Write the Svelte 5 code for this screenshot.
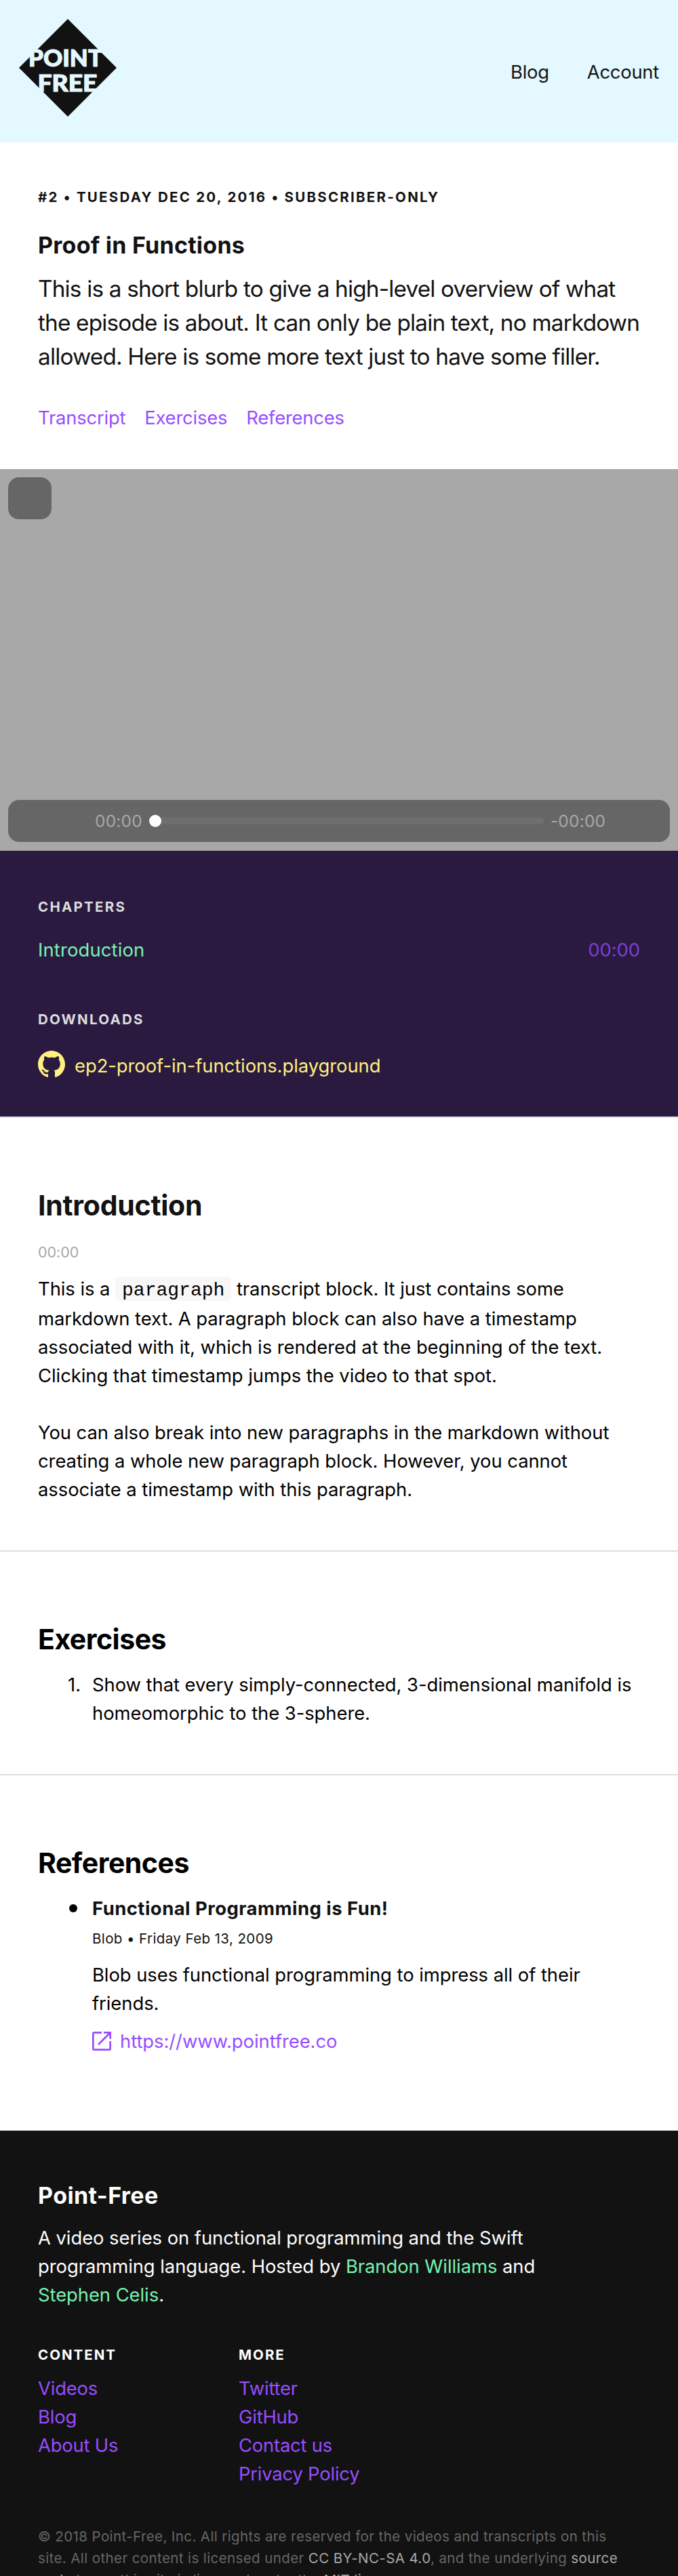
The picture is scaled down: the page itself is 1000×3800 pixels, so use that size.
<script>
  const jumpLinks = ['Transcript', 'Exercises', 'References'];
  const columns = [
    { title: 'Content', links: ['Videos', 'Blog', 'About Us'] },
    { title: 'More', links: ['Twitter', 'GitHub', 'Contact us', 'Privacy Policy'] }
  ];
</script>

<main>
  <header>
    <svg class="logo" viewBox="0 0 144 144" role="img" aria-label="Point-Free">
      <path d="M72 0L144 72L72 144L0 72Z" fill="#121212" />
      <text x="14" y="69.8" textLength="109" lengthAdjust="spacingAndGlyphs">POINT</text>
      <text x="27.5" y="106.8" textLength="88" lengthAdjust="spacingAndGlyphs">FREE</text>
    </svg>
    <nav><a>Blog</a><a>Account</a></nav>
  </header>

  <section class="intro">
    <h6>#2 • Tuesday Dec 20, 2016 • Subscriber-only</h6>
    <h1>Proof in Functions</h1>
    <p class="blurb">
      This is a short blurb to give a high-level overview of what<br />
      the episode is about. It can only be plain text, no markdown<br />
      allowed. Here is some more text just to have some filler.
    </p>
    <div class="jump">{#each jumpLinks as l}<a>{l}</a>{/each}</div>
  </section>

  <section class="video">
    <div class="big-play"></div>
    <div class="controls">
      <span>00:00</span>
      <div class="track"><i></i></div>
      <span>-00:00</span>
    </div>
  </section>

  <section class="side">
    <h6>Chapters</h6>
    <div class="chapter"><a>Introduction</a><span>00:00</span></div>
    <h6 class="second">Downloads</h6>
    <a class="download">
      <svg viewBox="0 0 16 16"><path fill="#fff080" d="M8 0C3.58 0 0 3.58 0 8c0 3.54 2.29 6.53 5.47 7.59.4.07.55-.17.55-.38 0-.19-.01-.82-.01-1.49-2.01.37-2.53-.49-2.69-.94-.09-.23-.48-.94-.82-1.13-.28-.15-.68-.52-.01-.53.63-.01 1.08.58 1.23.82.72 1.21 1.87.87 2.33.66.07-.52.28-.87.51-1.07-1.78-.2-3.64-.89-3.64-3.95 0-.87.31-1.59.82-2.15-.08-.2-.36-1.02.08-2.12 0 0 .67-.21 2.2.82.64-.18 1.32-.27 2-.27s1.36.09 2 .27c1.53-1.04 2.2-.82 2.2-.82.44 1.1.16 1.92.08 2.12.51.56.82 1.27.82 2.15 0 3.07-1.87 3.75-3.65 3.95.29.25.54.73.54 1.48 0 1.07-.01 1.93-.01 2.2 0 .21.15.46.55.38A8.01 8.01 0 0 0 16 8c0-4.42-3.58-8-8-8z" /></svg>
      ep2-proof-in-functions.playground
    </a>
  </section>

  <section class="block">
    <h2 class="ink">Introduction</h2>
    <div class="stamp">00:00</div>
    <p>
      This is a <code>paragraph</code> transcript block. It just contains some<br />
      markdown text. A paragraph block can also have a timestamp<br />
      associated with it, which is rendered at the beginning of the text.<br />
      Clicking that timestamp jumps the video to that spot.
    </p>
    <p class="next">
      You can also break into new paragraphs in the markdown without<br />
      creating a whole new paragraph block. However, you cannot<br />
      associate a timestamp with this paragraph.
    </p>
  </section>

  <section class="block">
    <h2 class="tight">Exercises</h2>
    <div class="item">
      <span class="marker">1.</span>
      <p>Show that every simply-connected, 3-dimensional manifold is<br />homeomorphic to the 3-sphere.</p>
    </div>
  </section>

  <section class="block refs">
    <h2 class="tight">References</h2>
    <div class="item">
      <span class="marker"><i class="dot"></i></span>
      <div>
        <h4>Functional Programming is Fun!</h4>
        <div class="byline">Blob • Friday Feb 13, 2009</div>
        <p>Blob uses functional programming to impress all of their<br />friends.</p>
        <a class="ext">
          <svg viewBox="0 0 28 28" fill="none" stroke="#974dff" stroke-width="2.7">
            <path d="M14 1.35H3Q1.35 1.35 1.35 3V25Q1.35 26.65 3 26.65H25Q26.65 26.65 26.65 25V14" />
            <path d="M17 1.35H26.65V10.8M26.2 1.8L9 19" />
          </svg>
          https://www.pointfree.co
        </a>
      </div>
    </div>
  </section>

  <footer>
    <h3>Point-Free</h3>
    <p>
      A video series on functional programming and the Swift<br />
      programming language. Hosted by <a>Brandon Williams</a> and<br />
      <a>Stephen Celis</a>.
    </p>
    <div class="columns">
      {#each columns as c}
        <div>
          <h6>{c.title}</h6>
          {#each c.links as l}<a>{l}</a>{/each}
        </div>
      {/each}
    </div>
    <div class="legal">
      © 2018 Point-Free, Inc. All rights are reserved for the videos and transcripts on this<br />
      site. All other content is licensed under <a>CC BY-NC-SA 4.0</a>, and the underlying <a>source</a><br />
      <a>code</a> to run this site is licensed under the <a>MIT license</a>.
    </div>
  </footer>
</main>

<style>
  :global(body) { background: #fff; }
  main {
    width: 1000px;
    height: 3800px;
    overflow: hidden;
    font: 400 27.4px/42px Inter, 'Liberation Sans', sans-serif;
    letter-spacing: -0.05px;
    color: #000;
    white-space: nowrap;
  }
  h1, h2, h3, h4, h6, p { margin: 0; font-weight: 700; }
  p { font-weight: 400; }
  section, footer, header { box-sizing: border-box; }

  header {
    height: 210px;
    background: #e4f8ff;
    display: flex;
    justify-content: space-between;
    padding: 28px 28px 0 28px;
  }
  .logo { width: 144px; height: 144px; }
  .logo text { font: 900 33.5px Lato, sans-serif; fill: #e4f8ff; stroke: #e4f8ff; stroke-width: 1.1px; letter-spacing: 0; }
  nav { display: flex; gap: 56px; padding-top: 57px; color: #121212; letter-spacing: -0.25px; }

  h6 {
    font-size: 20.5px;
    line-height: 33px;
    letter-spacing: 2.25px;
    text-transform: uppercase;
  }
  .intro { height: 482px; padding: 64px 56px 0; color: #121212; }
  h1 { font-size: 34px; line-height: 44px; letter-spacing: 0.25px; margin-top: 33px; }
  .blurb { font-size: 33.3px; line-height: 50px; letter-spacing: -0.81px; margin-top: 17px; }
  .jump { display: flex; gap: 28px; margin-top: 44px; color: #974dff; letter-spacing: -0.2px; }

  .video {
    height: 563px;
    background: #a8a8a8;
    padding: 12px 12px 13px;
    display: flex;
    flex-direction: column;
    justify-content: space-between;
  }
  .big-play { width: 64px; height: 62px; border-radius: 16px; background: #666; }
  .controls {
    height: 62px;
    border-radius: 16px;
    background: #666;
    display: flex;
    align-items: center;
    padding-left: 128px;
    color: #a8a8a8;
    font-size: 24.5px;
    letter-spacing: 0.2px;
  }
  .track {
    width: 582px;
    height: 10px;
    margin: 0 10px;
    border-radius: 5px;
    background: #6f6f6f;
    display: flex;
    align-items: center;
  }
  .track i { width: 18px; height: 18px; border-radius: 50%; background: #fff; }

  .side { height: 392px; padding: 66px 56px 0; background: #2a1a40; }
  .side h6 { color: #ddd; }
  .side .second { margin-top: 65px; }
  .chapter { display: flex; justify-content: space-between; margin-top: 26px; color: #79f2b0; }
  .chapter a { letter-spacing: 0.15px; }
  .chapter span { color: #7d3dd4; }
  .download { display: flex; align-items: center; gap: 14px; margin-top: 30px; color: #fff080; }
  .download svg { width: 40px; height: 40px; margin-bottom: 4px; }

  .block { padding: 104px 56px 69px; border-top: 2px solid #ddd; }
  h2 { font-size: 41px; line-height: 50px; letter-spacing: -0.25px; }
  .ink { color: #121212; }
  .tight { letter-spacing: -0.5px; }
  .stamp { font-size: 21.5px; line-height: 32px; margin-top: 28px; color: #a8a8a8; }
  .stamp + p { margin-top: 17px; }
  .next { margin-top: 42px; }
  code {
    display: inline-block;
    font: 28px/31px 'Liberation Mono', monospace;
    letter-spacing: 0;
    padding: 5px 10px 0;
    margin-bottom: 5px;
    border-radius: 6px;
    background: #f7f7f7;
  }

  .item { display: flex; gap: 17px; margin-top: 21px; }
  .marker { width: 63px; display: flex; justify-content: flex-end; }
  .dot { width: 12px; height: 12px; margin: 15px 5px 0 0; border-radius: 50%; background: #000; }
  h4 { font-size: 27.4px; letter-spacing: 0.5px; color: #121212; }
  .byline { font-size: 20.5px; line-height: 32px; letter-spacing: 0.4px; margin-top: 8px; color: #121212; }
  .byline + p { margin-top: 16px; }
  .ext { display: flex; align-items: center; gap: 13px; margin-top: 14px; color: #974dff; }
  .ext svg { width: 28px; height: 28px; }
  .refs { padding-bottom: 111px; }

  footer { height: 690px; padding: 74px 56px 0; background: #121212; color: #fff; }
  h3 { font-size: 34px; line-height: 44px; letter-spacing: 0.4px; }
  footer p { margin-top: 19px; }
  footer p a { color: #79f2b0; }
  .columns { display: grid; grid-template-columns: 296px 300px; margin-top: 51px; }
  .columns h6 { margin-bottom: 12px; letter-spacing: 2px; }
  .columns a { display: block; color: #974dff; letter-spacing: -0.2px; }
  .legal { margin-top: 56px; font-size: 20.5px; line-height: 32px; letter-spacing: 0.4px; color: #666; }
  .legal a { color: #a8a8a8; }
</style>
